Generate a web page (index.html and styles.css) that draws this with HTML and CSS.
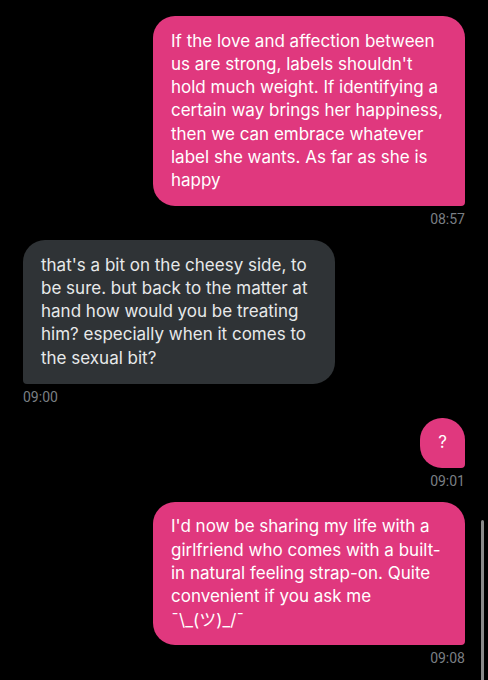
FILE: index.html
```html
<!DOCTYPE html>
<html lang="en">
<head>
<meta charset="utf-8">
<title>Messages</title>
<link rel="stylesheet" href="styles.css">
</head>
<body>
<div class="chat">
  <div class="msg sent">
    <div class="bubble">If the love and affection between us are strong, labels shouldn't hold much weight. If identifying a certain way brings her happiness, then we can embrace whatever label she wants. As far as she is happy</div>
    <div class="time">08:57</div>
  </div>
  <div class="msg received">
    <div class="bubble">that's a bit on the cheesy side, to be sure. but back to the matter at hand how would you be treating him? especially when it comes to the sexual bit?</div>
    <div class="time">09:00</div>
  </div>
  <div class="msg sent">
    <div class="bubble">?</div>
    <div class="time">09:01</div>
  </div>
  <div class="msg sent">
    <div class="bubble">I'd now be sharing my life with a girlfriend who comes with a built-in natural feeling strap-on. Quite convenient if you ask me <span class="nowrap">¯\_(ツ)_/¯</span></div>
    <div class="time">09:08</div>
  </div>
</div>
<div class="scrollbar"></div>
</body>
</html>
```
FILE: styles.css
```css
html, body {
  margin: 0;
  padding: 0;
  background: #000;
  height: 100%;
  overflow: hidden;
}
body {
  font-family: "Inter", "Noto Sans CJK JP", sans-serif;
  -webkit-font-smoothing: antialiased;
}
.chat {
  display: flex;
  flex-direction: column;
  gap: 12px;
  padding: 16px 23px 0 23px;
}
.msg {
  display: flex;
  flex-direction: column;
}
.sent { align-items: flex-end; }
.received { align-items: flex-start; }
.bubble {
  max-width: 312px;
  box-sizing: border-box;
  padding: 13.5px 18px;
  font-size: 17px;
  line-height: 23.3px;
  border-radius: 22px;
}
.nowrap { white-space: nowrap; }
.sent .bubble {
  background: #e0387e;
  color: #fff;
  border-bottom-right-radius: 4px;
}
.received .bubble {
  background: #2f3336;
  color: #e7e9ea;
  border-bottom-left-radius: 4px;
}
.time {
  margin-top: 4px;
  font-family: "Roboto", sans-serif;
  font-size: 14px;
  line-height: 18px;
  color: #7a7f84;
}
.scrollbar {
  position: fixed;
  left: 481px;
  top: 520px;
  width: 3px;
  height: 170px;
  background: #8a8a8a;
  border-radius: 2px;
}
```
